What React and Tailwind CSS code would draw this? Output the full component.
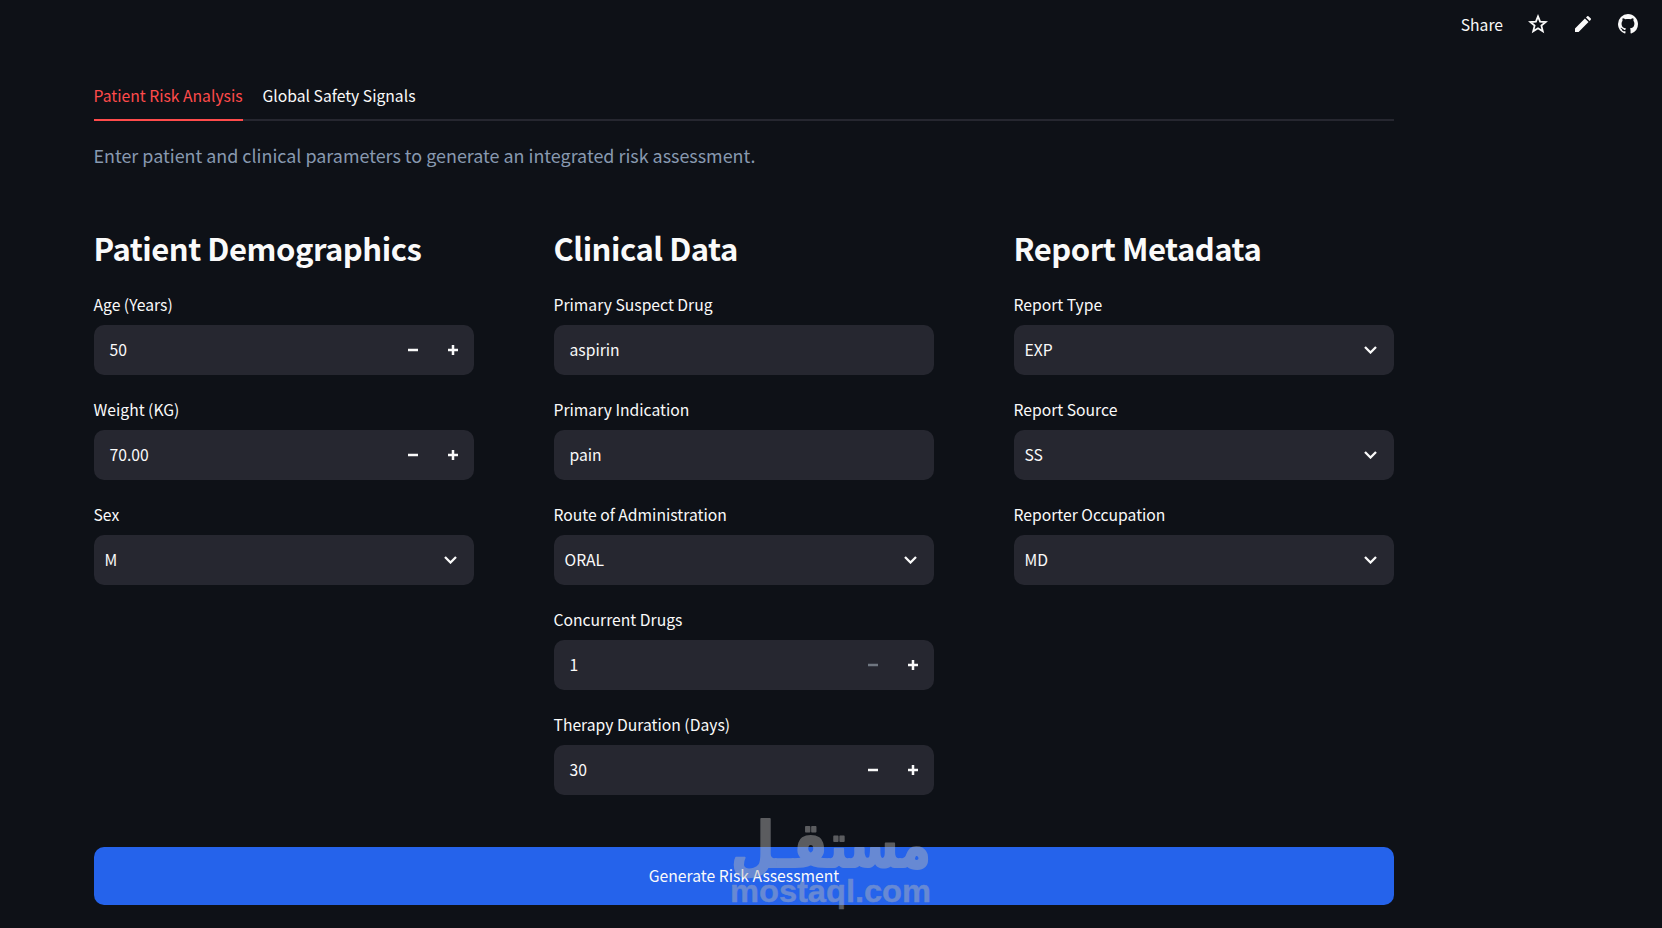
import React from 'react';
import { VscGithubInverted } from 'react-icons/vsc';

const demographics = [
  { label: 'Age (Years)', value: '50', type: 'number' },
  { label: 'Weight (KG)', value: '70.00', type: 'number' },
  { label: 'Sex', value: 'M', type: 'select' },
];

const clinical = [
  { label: 'Primary Suspect Drug', value: 'aspirin', type: 'text' },
  { label: 'Primary Indication', value: 'pain', type: 'text' },
  { label: 'Route of Administration', value: 'ORAL', type: 'select' },
  { label: 'Concurrent Drugs', value: '1', type: 'number', atMin: true },
  { label: 'Therapy Duration (Days)', value: '30', type: 'number' },
];

const metadata = [
  { label: 'Report Type', value: 'EXP', type: 'select' },
  { label: 'Report Source', value: 'SS', type: 'select' },
  { label: 'Reporter Occupation', value: 'MD', type: 'select' },
];

const Field = ({ label, value, type, atMin }) => (
  <div className="flex flex-col">
    <label className="-ml-[0.5px] h-[30px] leading-[20px] text-[15.7px] whitespace-nowrap">{label}</label>
    <div
      className={`flex h-[50px] items-center justify-between rounded-[10px] bg-[#262730] ${type === 'select' ? 'pl-[10.5px]' : 'pl-[15.5px]'}`}
    >
      <span className="text-[15.7px] leading-5">{value}</span>
      {type === 'number' && (
        <div className="flex">
          <button className={`flex h-[50px] w-10 items-center justify-center ${atMin ? 'text-[#6f7680]' : ''}`}>
            <svg className="size-[10px]" viewBox="0 0 8 8" fill="currentColor">
              <path d="M0 3v2h8v-2h-8z" />
            </svg>
          </button>
          <button className="mr-[1px] flex h-[50px] w-10 items-center justify-center">
            <svg className="size-[10px]" viewBox="0 0 8 8" fill="currentColor">
              <path d="M3 0v3h-3v2h3v3h2v-3h3v-2h-3v-3h-2z" />
            </svg>
          </button>
        </div>
      )}
      {type === 'select' && (
        <svg className="mr-[17px] h-2 w-[13px]" viewBox="0 0 13 8" fill="none" stroke="currentColor" strokeWidth="2.3">
          <path d="M1 1l5.5 5.5L12 1" />
        </svg>
      )}
    </div>
  </div>
);

const Column = ({ title, fields }) => (
  <section className="flex w-[380px] flex-col">
    <h2 className="-ml-[0.5px] h-[67px] text-[31px] leading-[40px] font-semibold tracking-[-0.47px] whitespace-nowrap">{title}</h2>
    <div className="flex flex-col gap-[25px]">
      {fields.map((field) => (
        <Field key={field.label} {...field} />
      ))}
    </div>
  </section>
);

const App = () => {
  return (
    <div className="relative h-[928px] w-[1662px] overflow-hidden bg-[#0e1117] font-['Noto_Sans_CJK_SC',sans-serif] text-[#fafafa]">
      <header className="flex h-[75px] items-start justify-end pr-6">
        <span className="mt-[15px] mr-[25px] text-[15.7px] leading-5">Share</span>
        <svg className="mt-[14px] mr-[27px] size-5" viewBox="0 0 20 20" fill="none" stroke="currentColor" strokeWidth="1.8">
          <path d="M10 2.4l2.1 5.2 5.6.4-4.3 3.6 1.4 5.6-4.8-3-4.8 3 1.4-5.6L2.3 8l5.6-.4z" />
        </svg>
        <svg className="mt-[16px] mr-[27px] size-4" viewBox="0 0 16 16" fill="currentColor">
          <path d="M0 16v-3.6L9.9 2.5l3.6 3.6L3.6 16zM11 1.4L12 .4a1.2 1.2 0 0 1 1.7 0l1.9 1.9a1.2 1.2 0 0 1 0 1.7l-1 1z" />
        </svg>
        <VscGithubInverted className="mt-[14px] size-5" />
      </header>

      <main className="ml-[94px] w-[1300px]">
        <nav className="flex h-[46px] gap-5 border-b-2 border-[#262730]">
          <button className="-ml-[0.5px] h-[46px] border-b-2 border-[#ff4b4b] pb-[2px] text-[15.7px] text-[#ff4b4b]">Patient Risk Analysis</button>
          <button className="h-[46px] pb-1 text-[15.7px]">Global Safety Signals</button>
        </nav>

        <p className="-ml-[0.5px] mt-[19px] h-[88px] text-[17.92px] leading-[30px] text-[#8899b0]">
          Enter patient and clinical parameters to generate an integrated risk assessment.
        </p>

        <div className="flex h-[619px] gap-20">
          <Column title="Patient Demographics" fields={demographics} />
          <Column title="Clinical Data" fields={clinical} />
          <Column title="Report Metadata" fields={metadata} />
        </div>

        <button className="flex h-[58px] w-full items-center justify-center rounded-[10px] bg-[#2563eb] text-[15.7px]">
          Generate Risk Assessment
        </button>
      </main>

      {/* watermark over the page */}
      <svg
        className="absolute top-[805px] left-[721px] h-[115px] w-[220px] overflow-visible opacity-45"
        viewBox="0 0 220 115"
        fill="#b8b8b8"
        stroke="#b8b8b8"
        strokeLinejoin="round"
      >
        <text x="10" y="62" textLength="200" lengthAdjust="spacingAndGlyphs" fontSize="63" fontWeight="700" fontFamily="DejaVu Sans" strokeWidth="2">
          مستقـل
        </text>
        <text x="9" y="97" textLength="201" lengthAdjust="spacingAndGlyphs" fontSize="31" fontWeight="700" fontFamily="Liberation Sans" strokeWidth="0.4">
          mostaql.com
        </text>
      </svg>
    </div>
  );
};

export default App;
